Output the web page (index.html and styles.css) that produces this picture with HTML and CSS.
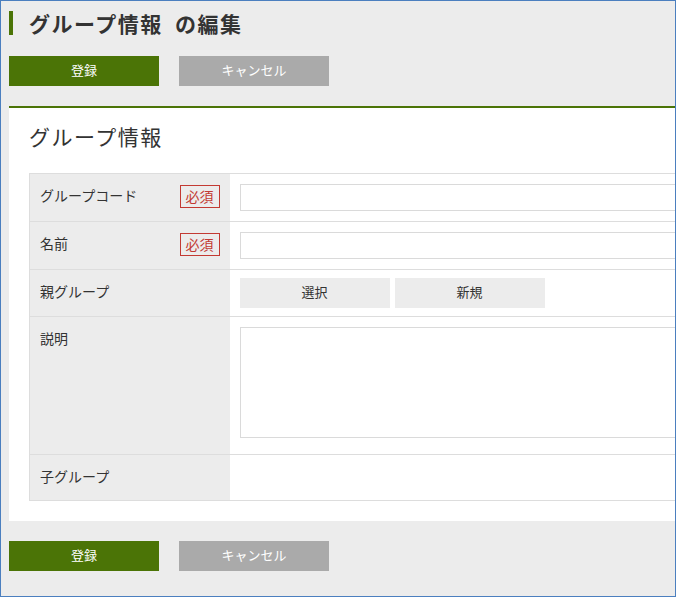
FILE: index.html
```html
<!DOCTYPE html>
<html lang="ja">
<head>
<meta charset="utf-8">
<title>グループ情報 の編集</title>
<link rel="stylesheet" href="styles.css">
</head>
<body>
<div class="window">
  <div class="page">
    <h1 class="title">グループ情報 の編集</h1>
    <div class="actions">
      <button class="btn btn-primary">登録</button>
      <button class="btn btn-cancel">キャンセル</button>
    </div>
    <section class="panel">
      <h2 class="panel-title">グループ情報</h2>
      <table class="form">
        <tr>
          <th><div class="label"><span>グループコード</span><span class="req">必須</span></div></th>
          <td><input class="text" type="text"></td>
        </tr>
        <tr>
          <th><div class="label"><span>名前</span><span class="req">必須</span></div></th>
          <td><input class="text" type="text"></td>
        </tr>
        <tr>
          <th><div class="label"><span>親グループ</span></div></th>
          <td class="btn-cell"><div class="sub-actions"><button class="btn btn-sub">選択</button><button class="btn btn-sub">新規</button></div></td>
        </tr>
        <tr>
          <th><div class="label"><span>説明</span></div></th>
          <td class="area-cell"><textarea class="area"></textarea></td>
        </tr>
        <tr>
          <th><div class="label"><span>子グループ</span></div></th>
          <td></td>
        </tr>
      </table>
    </section>
    <div class="actions actions-bottom">
      <button class="btn btn-primary">登録</button>
      <button class="btn btn-cancel">キャンセル</button>
    </div>
  </div>
</div>
</body>
</html>
```

FILE: styles.css
```css
* { box-sizing: border-box; }
html, body { margin: 0; padding: 0; background: #fff; }
body {
  font-family: "Noto Sans CJK JP", "Noto Sans", sans-serif;
  color: #333;
}
.window {
  width: 676px;
  height: 597px;
  border: 1px solid #4b7fbf;
  background: #ececec;
  overflow: hidden;
}
.page {
  width: 730px;
  padding: 10px 0 0 8px;
}
.title {
  margin: 0 0 21px;
  border-left: 4px solid #4b7406;
  padding-left: 16px;
  font-size: 21px;
  line-height: 24px;
  font-weight: bold;
  letter-spacing: 1.5px;
  word-spacing: 6px;
  color: #333;
}
.actions {
  display: flex;
  gap: 20px;
  margin-bottom: 20px;
}
.actions-bottom { margin: 20px 0 0; }
.btn {
  width: 150px;
  height: 30px;
  border: 0;
  padding: 0 0 2px;
  font-family: inherit;
  font-size: 13px;
  line-height: 28px;
  text-align: center;
  cursor: pointer;
}
.btn-primary { background: #4b7406; color: #fff; }
.btn-cancel { background: #aaaaaa; color: #fff; }
.btn-sub { background: #ececec; color: #333; }
.panel {
  background: #fff;
  border-top: 2px solid #4b7406;
  padding: 13px 20px 20px;
}
.panel-title {
  margin: 0 0 22px;
  font-size: 21px;
  line-height: 30px;
  font-weight: normal;
  letter-spacing: 1.5px;
  color: #333;
}
.form {
  width: 100%;
  border-collapse: collapse;
  border: 1px solid #ddd;
}
.form tr { border-top: 1px solid #ddd; border-bottom: 1px solid #ddd; }
.form th {
  width: 200px;
  background: #ececec;
  padding: 9px 10px 11px;
  vertical-align: top;
  text-align: left;
  font-weight: normal;
  font-size: 14px;
  line-height: 25px;
}
.form td {
  padding: 10px;
  vertical-align: top;
}
.label {
  display: flex;
  justify-content: space-between;
  align-items: center;
}
.req {
  width: 40px;
  height: 23px;
  margin-top: 2px;
  border: 1px solid #c33a33;
  color: #c33a33;
  font-size: 14px;
  line-height: 20px;
  text-align: center;
}
.text {
  display: block;
  width: 100%;
  height: 27px;
  border: 1px solid #dadada;
  margin: 0;
  padding: 0 6px;
  font-family: inherit;
}
.form td.btn-cell { padding: 8px 10px; }
.sub-actions { display: flex; gap: 5px; }
.form td.area-cell { padding: 10px 10px 16px; }
.area {
  display: block;
  width: 100%;
  height: 111px;
  margin: 0;
  border: 1px solid #dadada;
  resize: none;
  font-family: inherit;
}
```
